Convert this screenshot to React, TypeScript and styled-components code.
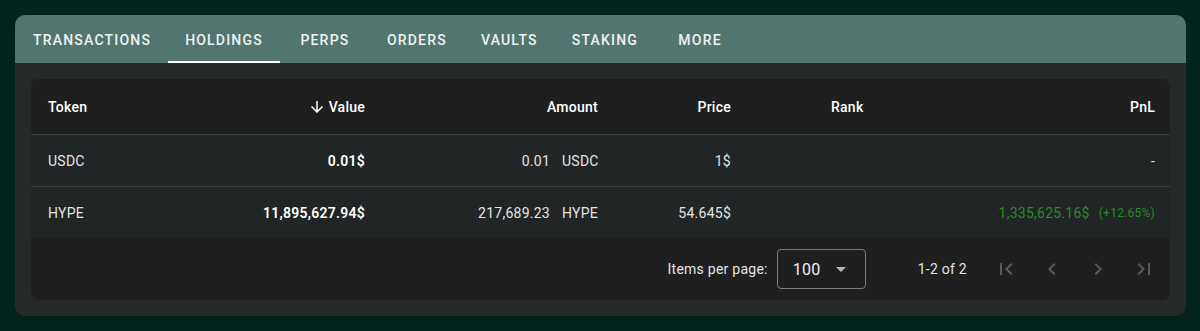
import React from "react";
import styled, { createGlobalStyle } from "styled-components";

const GlobalStyle = createGlobalStyle`
  html, body {
    margin: 0;
    padding: 0;
    background: #03231f;
    font-family: Roboto, "Liberation Sans", sans-serif;
    -webkit-font-smoothing: antialiased;
  }
`;

type Holding = {
  token: string;
  value: string;
  amount: string;
  symbol: string;
  price: string;
  pnl?: string;
  pnlPct?: string;
};

const tabs = ["Transactions", "Holdings", "Perps", "Orders", "Vaults", "Staking", "More"];

const holdings: Holding[] = [
  { token: "USDC", value: "0.01$", amount: "0.01", symbol: "USDC", price: "1$" },
  {
    token: "HYPE",
    value: "11,895,627.94$",
    amount: "217,689.23",
    symbol: "HYPE",
    price: "54.645$",
    pnl: "1,335,625.16$",
    pnlPct: "(+12.65%)",
  },
];

const Page = styled.div`
  padding: 15px 14px 14px 15px;
`;

const Card = styled.section`
  background: #252a29;
  border-radius: 10px;
  overflow: hidden;
`;

const TabBar = styled.nav`
  display: flex;
  height: 48px;
  padding-left: 1px;
  background: #51766f;
`;

const Tab = styled.div<{ $active?: boolean }>`
  position: relative;
  min-width: 90px;
  padding: 2px 17px 0;
  box-sizing: border-box;
  display: flex;
  align-items: center;
  justify-content: center;
  color: #eef3f2;
  font-size: 14px;
  font-weight: 500;
  letter-spacing: 1.2px;
  text-transform: uppercase;
  cursor: pointer;

  &::after {
    content: "";
    position: absolute;
    left: 0;
    right: 0;
    bottom: 0;
    height: 2px;
    background: ${(p) => (p.$active ? "#ffffff" : "transparent")};
  }
`;

const Body = styled.div`
  padding: 16px;
`;

const TableCard = styled.div`
  background: #1f1f1f;
  border-radius: 8px;
  overflow: hidden;
  letter-spacing: 0.25px;
`;

const Row = styled.div<{ $header?: boolean; $last?: boolean }>`
  display: grid;
  grid-template-columns: 150px 167px 233px 133px 1fr 1fr;
  align-items: center;
  height: ${(p) => (p.$header ? "55px" : "51px")};
  padding: 0 15px 0 17px;
  background: ${(p) => (p.$header ? "#1f1f1f" : "#222526")};
  border-bottom: ${(p) => (p.$last ? "none" : "1px solid #3a3e3e")};
  color: ${(p) => (p.$header ? "#ffffff" : "#e2e4e4")};
  font-size: 14px;
  font-weight: ${(p) => (p.$header ? 500 : 400)};
`;

const Cell = styled.div<{ $align?: "left" | "right"; $bold?: boolean; $indent?: number }>`
  display: flex;
  align-items: center;
  justify-content: ${(p) => (p.$align === "right" ? "flex-end" : "flex-start")};
  padding-left: ${(p) => p.$indent ?? 0}px;
  font-weight: ${(p) => (p.$bold ? 600 : "inherit")};
  color: ${(p) => (p.$bold ? "#ffffff" : "inherit")};
  white-space: nowrap;
`;

const SortIcon = styled.svg`
  width: 18px;
  height: 18px;
  margin-right: 3px;
  fill: #ffffff;
`;

const Symbol = styled.span`
  width: 36px;
  margin-left: 12px;
  text-align: left;
`;

const Pnl = styled.span`
  color: #2a8a2a;
`;

const PnlPct = styled.span`
  color: #2a8a2a;
  font-size: 12px;
  margin-left: 9px;
`;

const Paginator = styled.div`
  display: flex;
  align-items: center;
  justify-content: flex-end;
  height: 62px;
  padding-right: 3px;
  color: #e2e4e4;
  font-size: 14px;
`;

const Select = styled.div`
  display: flex;
  align-items: center;
  justify-content: space-between;
  box-sizing: border-box;
  width: 89px;
  height: 40px;
  margin-left: 9px;
  padding: 0 19px 0 15px;
  border: 1px solid #7a7d7d;
  border-radius: 4px;
  font-size: 16px;
  color: #f0f0f0;
`;

const Caret = styled.span`
  width: 0;
  height: 0;
  border-left: 5px solid transparent;
  border-right: 5px solid transparent;
  border-top: 5px solid #b5b8b8;
`;

const Range = styled.span`
  margin: 0 16px 0 52px;
`;

const PageButton = styled.button`
  width: 46px;
  height: 40px;
  border: none;
  background: none;
  padding: 0;
  display: flex;
  align-items: center;
  justify-content: center;

  svg {
    width: 24px;
    height: 24px;
    fill: #585b5b;
  }
`;

const icons = [
  "M18.41 16.59L13.82 12l4.59-4.59L17 6l-6 6 6 6zM6 6h2v12H6z",
  "M15.41 7.41L14 6l-6 6 6 6 1.41-1.41L10.83 12z",
  "M10 6L8.59 7.41 13.17 12l-4.58 4.59L10 18l6-6z",
  "M5.59 7.41L10.18 12l-4.59 4.59L7 18l6-6-6-6zM16 6h2v12h-2z",
];

export default function App() {
  return (
    <>
      <GlobalStyle />
      <Page>
        <Card>
          <TabBar>
            {tabs.map((t) => (
              <Tab key={t} $active={t === "Holdings"}>
                {t}
              </Tab>
            ))}
          </TabBar>
          <Body>
            <TableCard>
              <Row $header>
                <Cell>Token</Cell>
                <Cell $align="right">
                  <SortIcon viewBox="0 0 24 24">
                    <path d="M20 12l-1.41-1.41L13 16.17V4h-2v12.17l-5.58-5.59L4 12l8 8 8-8z" />
                  </SortIcon>
                  Value
                </Cell>
                <Cell $align="right">Amount</Cell>
                <Cell $align="right">Price</Cell>
                <Cell $indent={100}>Rank</Cell>
                <Cell $align="right">PnL</Cell>
              </Row>
              {holdings.map((h, i) => (
                <Row key={h.token} $last={i === holdings.length - 1}>
                  <Cell>{h.token}</Cell>
                  <Cell $align="right" $bold>
                    {h.value}
                  </Cell>
                  <Cell $align="right">
                    {h.amount}
                    <Symbol>{h.symbol}</Symbol>
                  </Cell>
                  <Cell $align="right">{h.price}</Cell>
                  <Cell $indent={100} />
                  <Cell $align="right">
                    {h.pnl ? (
                      <>
                        <Pnl>{h.pnl}</Pnl>
                        <PnlPct>{h.pnlPct}</PnlPct>
                      </>
                    ) : (
                      "-"
                    )}
                  </Cell>
                </Row>
              ))}
              <Paginator>
                <span>Items per page:</span>
                <Select>
                  <span>100</span>
                  <Caret />
                </Select>
                <Range>1-2 of 2</Range>
                {icons.map((d) => (
                  <PageButton key={d} disabled>
                    <svg viewBox="0 0 24 24">
                      <path d={d} />
                    </svg>
                  </PageButton>
                ))}
              </Paginator>
            </TableCard>
          </Body>
        </Card>
      </Page>
    </>
  );
}
